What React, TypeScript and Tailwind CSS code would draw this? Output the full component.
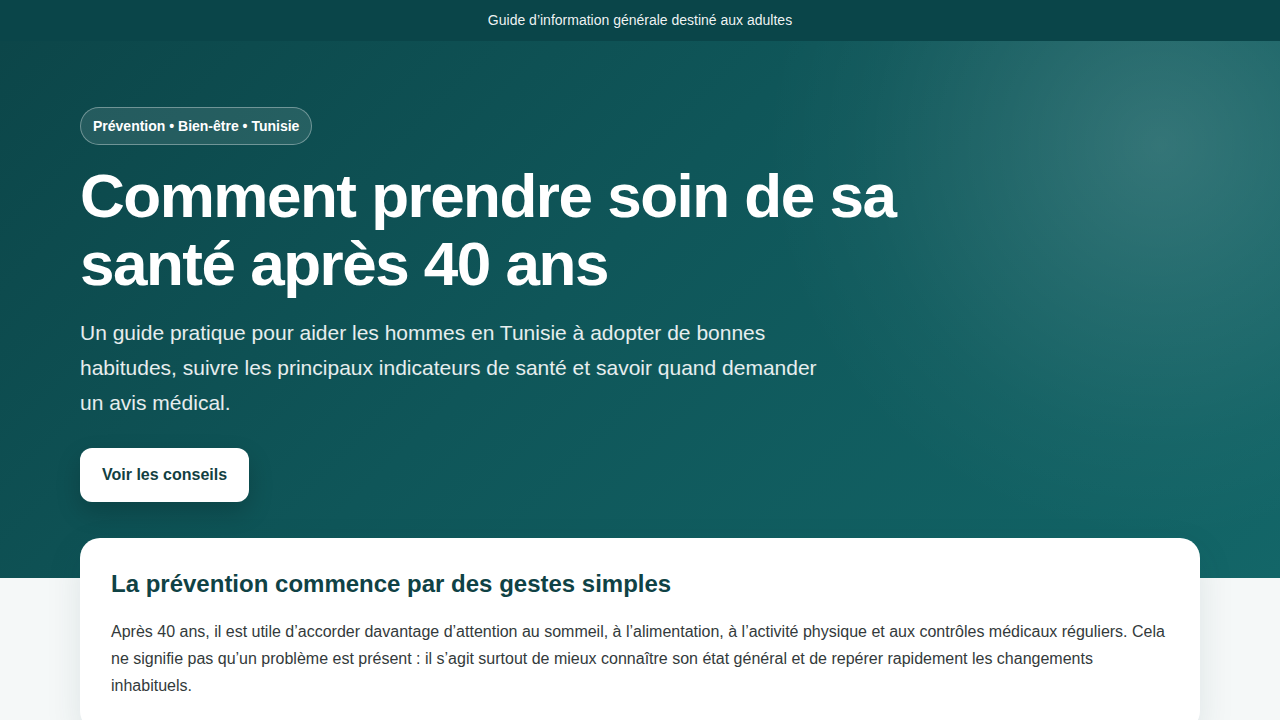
export default function App() {
  return (
    <div className="min-h-screen bg-[#f5f8f8] font-['Liberation_Sans',Arial,sans-serif]">
      {/* top strip */}
      <div className="flex h-[41px] items-center justify-center bg-[#0a4549] text-[14px] text-white/95">
        Guide d’information générale destiné aux adultes
      </div>

      {/* hero */}
      <header className="relative overflow-hidden bg-[linear-gradient(135deg,#0c4649_0%,#0f5659_45%,#136668_100%)]">
        <div className="pointer-events-none absolute left-[760px] top-[-296px] h-[800px] w-[800px] rounded-full bg-[radial-gradient(circle,rgba(255,255,255,0.15)_0%,rgba(255,255,255,0.08)_28%,rgba(255,255,255,0.025)_52%,rgba(255,255,255,0)_70%)]" />
        <div className="relative mx-auto max-w-[1120px] pb-[76px] pt-[66px]">
          <span className="inline-flex h-[38px] items-center rounded-full border border-white/35 bg-white/10 px-3 text-[14px] font-bold text-white">
            Prévention • Bien-être • Tunisie
          </span>
          <h1 className="mt-[17px] max-w-[860px] text-[62px] font-bold leading-[68px] tracking-[-1.5px] text-white">
            Comment prendre soin de sa santé après 40 ans
          </h1>
          <p className="mt-[17px] max-w-[760px] text-[21px] leading-[35px] text-white/90">
            Un guide pratique pour aider les hommes en Tunisie à adopter de bonnes habitudes, suivre les principaux
            indicateurs de santé et savoir quand demander un avis médical.
          </p>
          <button className="mt-[28px] h-[54px] rounded-xl bg-white px-[22px] text-[16px] font-bold text-[#123f42] shadow-[0_10px_24px_rgba(0,0,0,0.18)]">
            Voir les conseils
          </button>
        </div>
      </header>

      {/* intro card */}
      <main className="relative mx-auto -mt-10 max-w-[1120px]">
        <section className="rounded-[20px] bg-white px-[31px] pb-8 pt-[29px] shadow-[0_12px_36px_rgba(15,60,64,0.1)]">
          <h2 className="text-[24px] font-bold leading-[34px] text-[#0f4245]">
            La prévention commence par des gestes simples
          </h2>
          <p className="mt-[17px] text-[16px] leading-[27px] text-[#333a3b]">
            Après 40 ans, il est utile d’accorder davantage d’attention au sommeil, à l’alimentation, à l’activité physique
            et aux contrôles médicaux réguliers. Cela ne signifie pas qu’un problème est présent : il s’agit surtout de mieux
            connaître son état général et de repérer rapidement les changements inhabituels.
          </p>
        </section>
      </main>
    </div>
  );
}
